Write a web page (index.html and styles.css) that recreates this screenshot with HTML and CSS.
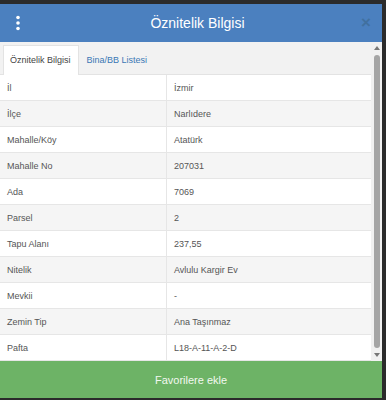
FILE: index.html
```html
<!DOCTYPE html>
<html lang="tr">
<head>
    <meta charset="UTF-8">
    <meta name="viewport" content="width=device-width, initial-scale=1.0">
    <title>Öznitelik Bilgisi</title>
    <link rel="stylesheet" href="styles.css">
</head>
<body>
    <div class="modal">
        <div class="modal-header">
            <span class="menu-btn">
                <svg width="6" height="16" viewBox="0 0 6 16">
                    <circle cx="3" cy="2.5" r="1.8" fill="#fff"/>
                    <circle cx="3" cy="8" r="1.8" fill="#fff"/>
                    <circle cx="3" cy="13.5" r="1.8" fill="#fff"/>
                </svg>
            </span>
            <h2>Öznitelik Bilgisi</h2>
            <span class="close-btn">×</span>
        </div>
        <div class="modal-main">
            <div class="content">
                <ul class="tabs">
                    <li class="active">Öznitelik Bilgisi</li>
                    <li>Bina/BB Listesi</li>
                </ul>
                <table class="attr-table">
                    <tr><td>İl</td><td>İzmir</td></tr>
                    <tr><td>İlçe</td><td>Narlıdere</td></tr>
                    <tr><td>Mahalle/Köy</td><td>Atatürk</td></tr>
                    <tr><td>Mahalle No</td><td>207031</td></tr>
                    <tr><td>Ada</td><td>7069</td></tr>
                    <tr><td>Parsel</td><td>2</td></tr>
                    <tr><td>Tapu Alanı</td><td>237,55</td></tr>
                    <tr><td>Nitelik</td><td>Avlulu Kargir Ev</td></tr>
                    <tr><td>Mevkii</td><td>-</td></tr>
                    <tr><td>Zemin Tip</td><td>Ana Taşınmaz</td></tr>
                    <tr><td>Pafta</td><td>L18-A-11-A-2-D</td></tr>
                </table>
            </div>
            <div class="scrollbar">
                <span class="arrow up"></span>
                <span class="thumb"></span>
                <span class="arrow down"></span>
            </div>
        </div>
        <button class="fav-btn">Favorilere ekle</button>
    </div>
</body>
</html>
```

FILE: styles.css
```css
body {
    margin: 0;
    background-color: #2b2b2b;
    font-family: "Liberation Sans", Arial, sans-serif;
    height: 400px;
    overflow: hidden;
}

.modal {
    width: 382px;
    margin-top: 4px;
    background: #fff;
}

.modal-header {
    height: 38px;
    background-color: #4b80bf;
    display: flex;
    align-items: center;
    padding: 0 6px 0 15px;
}

.menu-btn {
    display: flex;
    width: 20px;
}

.modal-header h2 {
    flex: 1;
    margin: 0 0 0 4px;
    text-align: center;
    font-size: 14px;
    font-weight: normal;
    color: #fff;
}

.close-btn {
    width: 20px;
    text-align: center;
    font-size: 17px;
    font-weight: bold;
    color: #41709f;
}

.modal-main {
    display: flex;
    height: 319px;
}

.content {
    flex: 1;
    overflow: hidden;
}

.tabs {
    list-style: none;
    margin: 0;
    padding: 3px 0 0 3px;
    height: 29px;
    display: flex;
    background: #f2f2f2;
    border-bottom: 1px solid #e3e3e3;
}

.tabs li {
    font-size: 9px;
    color: #3a78b5;
    padding: 10px 8px 0 8px;
}

.tabs li.active {
    background: #fff;
    color: #444;
    border: 1px solid #e3e3e3;
    border-bottom: none;
    margin-bottom: -1px;
    padding: 9px 7px 0 6px;
}

.attr-table {
    width: 100%;
    border-collapse: collapse;
    font-size: 9px;
    color: #555;
}

.attr-table td {
    height: 25px;
    padding: 0 7px;
    border-bottom: 1px solid #e6e6e6;
}

.attr-table td:first-child {
    width: 152px;
    border-right: 1px solid #e6e6e6;
}

.attr-table tr:nth-child(even) td {
    background: #f5f5f5;
}

.scrollbar {
    width: 11px;
    background: #f1f1f1;
    display: flex;
    flex-direction: column;
    align-items: center;
    padding: 4px 0;
}

.arrow {
    width: 0;
    height: 0;
    border-left: 3px solid transparent;
    border-right: 3px solid transparent;
}

.arrow.up {
    border-bottom: 4px solid #777;
}

.arrow.down {
    border-top: 4px solid #777;
}

.thumb {
    flex: 1;
    width: 6px;
    margin: 5px 0;
    background: #a5a5a5;
    border-radius: 3px;
}

.fav-btn {
    display: block;
    width: 100%;
    height: 37px;
    border: none;
    background-color: #6db366;
    color: #f2f8f0;
    font-family: "Liberation Sans", Arial, sans-serif;
    font-size: 11px;
}
```
